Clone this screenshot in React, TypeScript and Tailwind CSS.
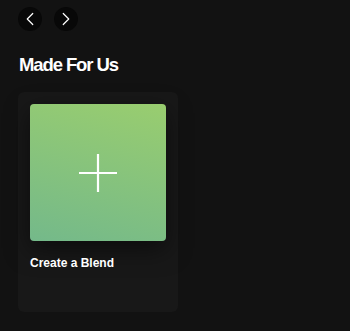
import { ChevronLeft, ChevronRight } from "lucide-react";

const NavButton = ({ dir }: { dir: "left" | "right" }) => (
  <button className="w-6 h-6 rounded-full bg-[#080808] flex items-center justify-center text-white">
    {dir === "left" ? (
      <ChevronLeft size={22} strokeWidth={1.3} />
    ) : (
      <ChevronRight size={22} strokeWidth={1.3} />
    )}
  </button>
);

const BlendCard = () => (
  <div className="w-[160px] h-[220px] rounded-md bg-[#181818] p-3 flex flex-col">
    {/* cover */}
    <div className="w-[136px] h-[137px] rounded bg-[linear-gradient(15deg,#74b98a,#99cd6f)] shadow-[0_8px_24px_rgba(0,0,0,0.5)] flex items-center justify-center">
      <svg width="40" height="40" viewBox="0 0 40 40">
        <path d="M20 1v38M1 20h38" stroke="white" strokeWidth="2.2" />
      </svg>
    </div>
    {/* title */}
    <p className="mt-[14px] text-[12px] font-bold text-white leading-4">
      Create a Blend
    </p>
  </div>
);

export default function App() {
  return (
    <div
      className="w-[350px] h-[331px] bg-[#121212] overflow-hidden"
      style={{ fontFamily: "'Liberation Sans', Arial, sans-serif" }}
    >
      <div className="pt-[7px] pl-[18px] flex gap-3">
        <NavButton dir="left" />
        <NavButton dir="right" />
      </div>
      <h2 className="mt-[22px] pl-[19px] text-[18.5px] font-bold text-white tracking-[-0.06em] leading-6">
        Made For Us
      </h2>
      <div className="mt-[15px] pl-[18px]">
        <BlendCard />
      </div>
    </div>
  );
}
